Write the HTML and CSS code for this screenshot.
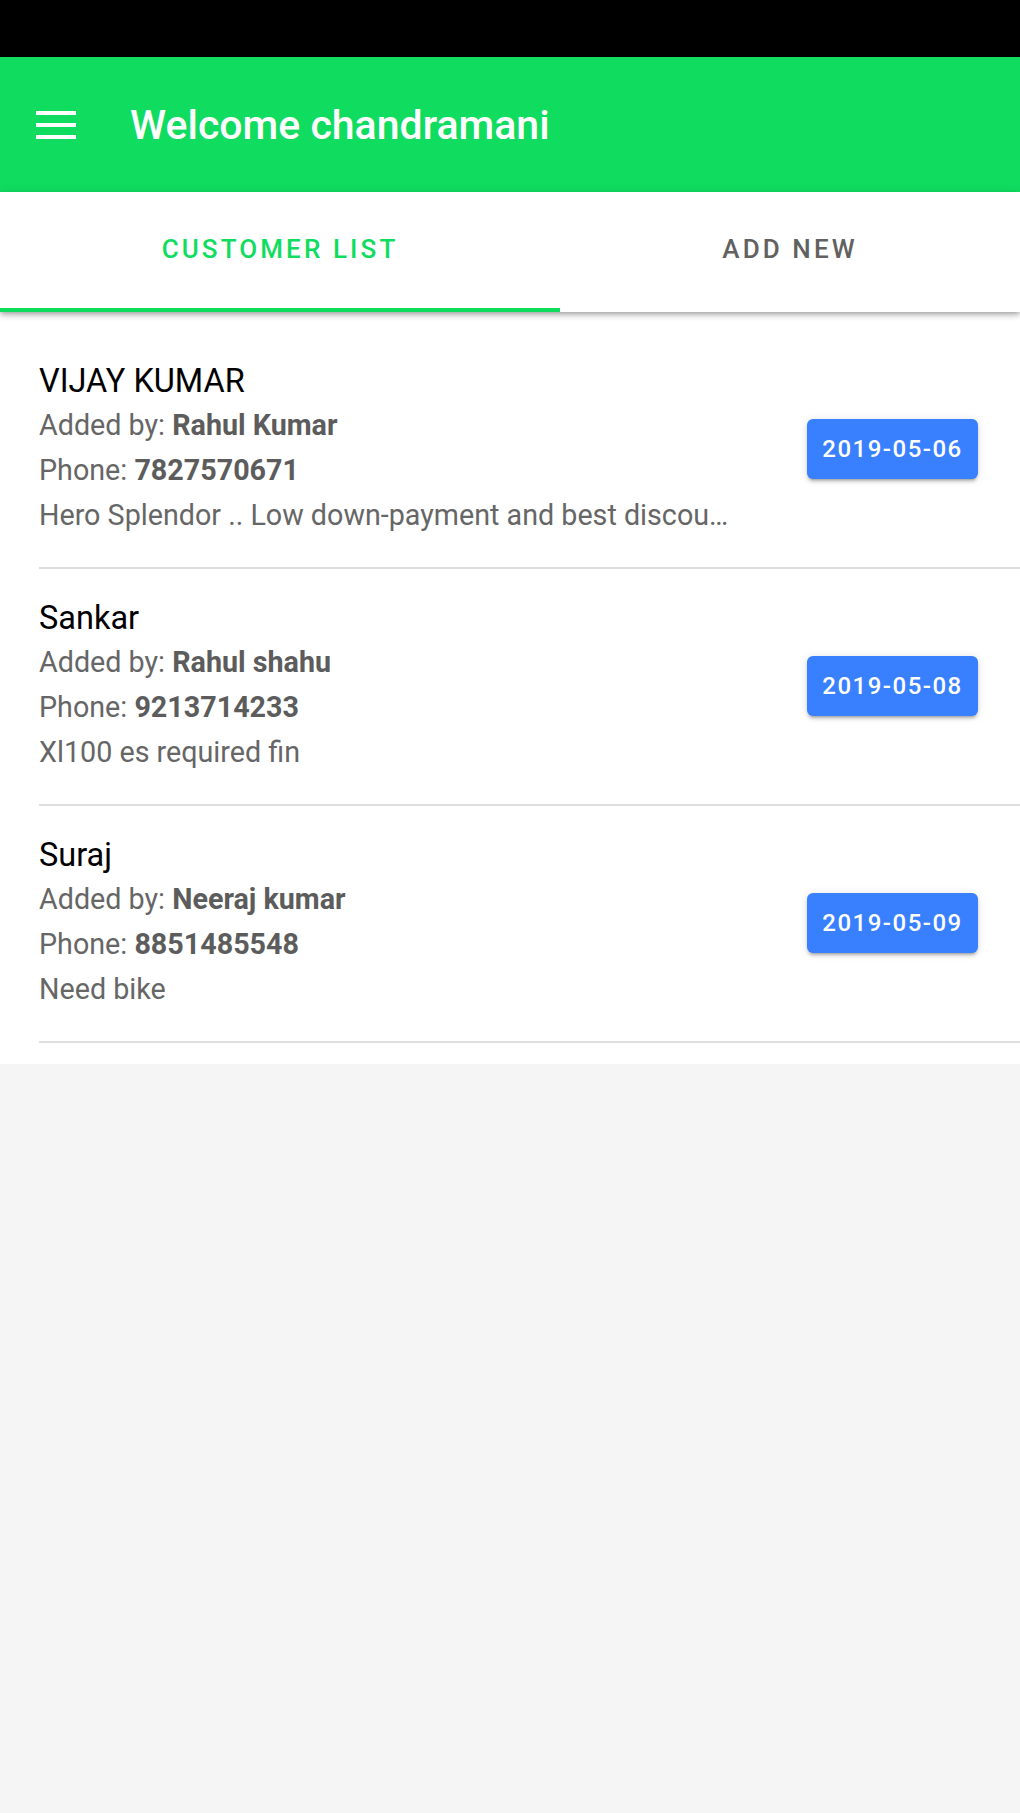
FILE: index.html
```html
<!DOCTYPE html>
<html>
<head>
<title>Customers</title>
<link rel="stylesheet" href="styles.css">
</head>
<body>

<div class="statusbar"></div>

<div class="toolbar">
  <svg class="menu" width="40" height="28" viewBox="0 0 40 28">
    <rect x="0" y="0" width="40" height="4" fill="#fff"/>
    <rect x="0" y="12" width="40" height="4" fill="#fff"/>
    <rect x="0" y="24" width="40" height="4" fill="#fff"/>
  </svg>
  <div class="title">Welcome chandramani</div>
</div>

<div class="tabs">
  <div class="tab tab-list active">CUSTOMER LIST</div>
  <div class="tab tab-new">ADD NEW</div>
</div>

<div class="list">
  <div class="item">
    <div class="item-inner">
      <div class="info">
        <div class="name">VIJAY KUMAR</div>
        <div class="line">Added by: <b>Rahul Kumar</b></div>
        <div class="line">Phone: <b>7827570671</b></div>
        <div class="line desc">Hero Splendor .. Low down-payment and best discount offers</div>
      </div>
      <div class="date">2019-05-06</div>
    </div>
  </div>
  <div class="item">
    <div class="item-inner">
      <div class="info">
        <div class="name">Sankar</div>
        <div class="line">Added by: <b>Rahul shahu</b></div>
        <div class="line">Phone: <b>9213714233</b></div>
        <div class="line desc">Xl100 es required fin</div>
      </div>
      <div class="date">2019-05-08</div>
    </div>
  </div>
  <div class="item">
    <div class="item-inner">
      <div class="info">
        <div class="name">Suraj</div>
        <div class="line">Added by: <b>Neeraj kumar</b></div>
        <div class="line">Phone: <b>8851485548</b></div>
        <div class="line desc">Need bike</div>
      </div>
      <div class="date">2019-05-09</div>
    </div>
  </div>
</div>

</body>
</html>
```

FILE: styles.css
```css
body {
  margin: 0;
  background-color: #f5f5f5;
  font-family: Roboto, "Liberation Sans", sans-serif;
}

.statusbar {
  height: 57px;
  background-color: #000;
}

.toolbar {
  height: 135px;
  background-color: #10dc60;
  display: flex;
  align-items: center;
  color: #fff;
}

.menu {
  margin-left: 36px;
  display: block;
}

.title {
  margin-left: 54px;
  font-size: 41px;
  font-weight: 500;
}

.tabs {
  display: flex;
  height: 120px;
  background-color: #fff;
  position: relative;
  z-index: 2;
  box-shadow: 0 2px 4px -1px rgba(0,0,0,.2), 0 4px 5px 0 rgba(0,0,0,.14), 0 1px 10px 0 rgba(0,0,0,.12);
}

.tab {
  display: flex;
  align-items: center;
  justify-content: center;
  font-size: 26px;
  font-weight: 500;
  letter-spacing: 3.1px;
  color: #616161;
  box-sizing: border-box;
  padding-bottom: 6px;
}

.tab-list {
  width: 560px;
}

.tab-new {
  flex: 1;
}

.tab.active {
  color: #10dc60;
  border-bottom: 4px solid #10dc60;
  padding-bottom: 2px;
}

.list {
  background-color: #fff;
  padding: 20px 0 21px 0;
}

.item {
  padding-left: 39px;
}

.item-inner {
  display: flex;
  align-items: center;
  padding: 27px 42px 29px 0;
  border-bottom: 2px solid #dedede;
}

.info {
  flex: 1;
  min-width: 0;
}

.name {
  font-size: 32.5px;
  line-height: 44px;
  color: #000;
}

.line {
  font-size: 28.7px;
  line-height: 45px;
  color: #666;
  white-space: nowrap;
  overflow: hidden;
  text-overflow: ellipsis;
}

.line b {
  font-weight: 700;
  color: #5c5c5c;
}

.date {
  margin-left: 68px;
  width: 171px;
  height: 60px;
  box-sizing: border-box;
  display: flex;
  align-items: center;
  justify-content: center;
  background-color: #3880ff;
  color: #fff;
  border-radius: 6px;
  font-size: 24px;
  font-weight: 500;
  letter-spacing: 1.5px;
  box-shadow: 0 4px 2px -3px rgba(0,0,0,.2), 0 3px 3px 0 rgba(0,0,0,.14), 0 1px 8px 0 rgba(0,0,0,.12);
}
```
